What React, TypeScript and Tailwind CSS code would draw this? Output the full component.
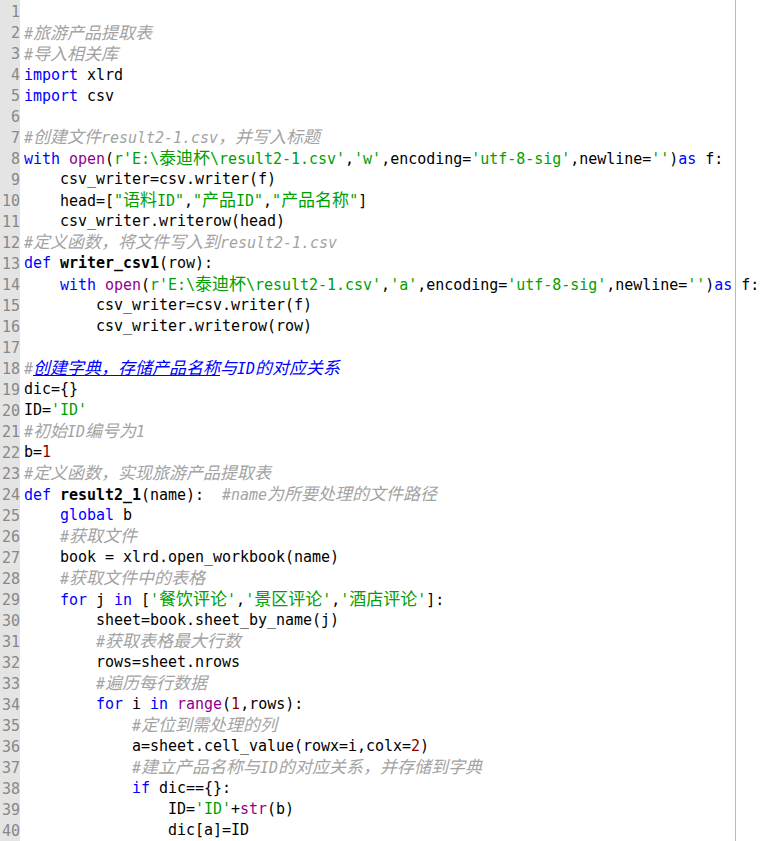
import React from "react"

type Tok = [string, string]

// t plain, k keyword, b builtin, s string, n number, c comment, f def name, u link, ui link (no underline)
const lines: Tok[][] = [
    [],
    [["c", "#旅游产品提取表"]],
    [["c", "#导入相关库"]],
    [["k", "import"], ["t", " xlrd"]],
    [["k", "import"], ["t", " csv"]],
    [],
    [["c", "#创建文件result2-1.csv，并写入标题"]],
    [["k", "with"], ["t", " "], ["b", "open"], ["t", "("], ["s", "r'E:\\泰迪杯\\result2-1.csv'"], ["t", ","], ["s", "'w'"], ["t", ",encoding="], ["s", "'utf-8-sig'"], ["t", ",newline="], ["s", "''"], ["t", ")"], ["k", "as"], ["t", " f:"]],
    [["t", "    csv_writer=csv.writer(f)"]],
    [["t", "    head=["], ["s", "\"语料ID\""], ["t", ","], ["s", "\"产品ID\""], ["t", ","], ["s", "\"产品名称\""], ["t", "]"]],
    [["t", "    csv_writer.writerow(head)"]],
    [["c", "#定义函数，将文件写入到result2-1.csv"]],
    [["k", "def"], ["t", " "], ["f", "writer_csv1"], ["t", "(row):"]],
    [["t", "    "], ["k", "with"], ["t", " "], ["b", "open"], ["t", "("], ["s", "r'E:\\泰迪杯\\result2-1.csv'"], ["t", ","], ["s", "'a'"], ["t", ",encoding="], ["s", "'utf-8-sig'"], ["t", ",newline="], ["s", "''"], ["t", ")"], ["k", "as"], ["t", " f:"]],
    [["t", "        csv_writer=csv.writer(f)"]],
    [["t", "        csv_writer.writerow(row)"]],
    [],
    [["c", "#"], ["u", "创建字典，存储产品名称"], ["ui", "与ID的对应关系"]],
    [["t", "dic={}"]],
    [["t", "ID="], ["s", "'ID'"]],
    [["c", "#初始ID编号为1"]],
    [["t", "b="], ["n", "1"]],
    [["c", "#定义函数，实现旅游产品提取表"]],
    [["k", "def"], ["t", " "], ["f", "result2_1"], ["t", "(name):  "], ["c", "#name为所要处理的文件路径"]],
    [["t", "    "], ["k", "global"], ["t", " b"]],
    [["t", "    "], ["c", "#获取文件"]],
    [["t", "    book = xlrd.open_workbook(name)"]],
    [["t", "    "], ["c", "#获取文件中的表格"]],
    [["t", "    "], ["k", "for"], ["t", " j "], ["k", "in"], ["t", " ["], ["s", "'餐饮评论'"], ["t", ","], ["s", "'景区评论'"], ["t", ","], ["s", "'酒店评论'"], ["t", "]:"]],
    [["t", "        sheet=book.sheet_by_name(j)"]],
    [["t", "        "], ["c", "#获取表格最大行数"]],
    [["t", "        rows=sheet.nrows"]],
    [["t", "        "], ["c", "#遍历每行数据"]],
    [["t", "        "], ["k", "for"], ["t", " i "], ["k", "in"], ["t", " "], ["b", "range"], ["t", "("], ["n", "1"], ["t", ",rows):"]],
    [["t", "            "], ["c", "#定位到需处理的列"]],
    [["t", "            a=sheet.cell_value(rowx=i,colx="], ["n", "2"], ["t", ")"]],
    [["t", "            "], ["c", "#建立产品名称与ID的对应关系，并存储到字典"]],
    [["t", "            "], ["k", "if"], ["t", " dic=={}:"]],
    [["t", "                ID="], ["s", "'ID'"], ["t", "+"], ["b", "str"], ["t", "(b)"]],
    [["t", "                dic[a]=ID"]],
]

const tokClass: Record<string, string> = {
    t: "text-black",
    k: "text-[#0000ff]",
    b: "text-[#900090]",
    s: "text-[#00a000]",
    n: "text-[#880000]",
    c: "text-[#a3a3a3] italic",
    f: "text-black font-bold",
    u: "text-[#0000ff] italic underline",
    ui: "text-[#0000ff] italic",
}

const cjk = /([\u3000-\u303f\u4e00-\u9fff\uff00-\uffef]+)/

const Piece = ({ kind, text }: { kind: string; text: string }) => {
    const parts = text.split(cjk).filter((p) => p !== "")
    return (
        <span className={tokClass[kind]}>
            {parts.map((p, i) =>
                cjk.test(p) ? (
                    <span key={i} className="text-[17px] leading-none tracking-normal font-['Noto_Sans_CJK_SC',sans-serif] font-normal">
                        {p}
                    </span>
                ) : (
                    <span key={i}>{p}</span>
                )
            )}
        </span>
    )
}

export default function App() {
    return (
        <div className="flex w-[766px] h-[841px] bg-white overflow-hidden font-['DejaVu_Sans_Mono',monospace] text-[15px] tracking-[-0.03px]">
            <div className="w-[20px] shrink-0 bg-[#e4e4e4] pt-[2px] flex flex-col">
                {lines.map((_, i) => (
                    <div key={i} className="h-[21px] leading-[21px] text-right text-[#888888] whitespace-nowrap flex justify-end">
                        {i + 1}
                    </div>
                ))}
            </div>
            <div className="relative flex-1 pl-[4px] pt-[2px] flex flex-col">
                <div className="absolute top-0 bottom-0 left-[715px] w-px bg-[#b9b9b9]" />
                {lines.map((toks, i) => (
                    <div key={i} className="relative h-[21px] leading-[21px] whitespace-pre">
                        {toks.map((t, j) => (
                            <Piece key={j} kind={t[0]} text={t[1]} />
                        ))}
                    </div>
                ))}
            </div>
        </div>
    )
}
